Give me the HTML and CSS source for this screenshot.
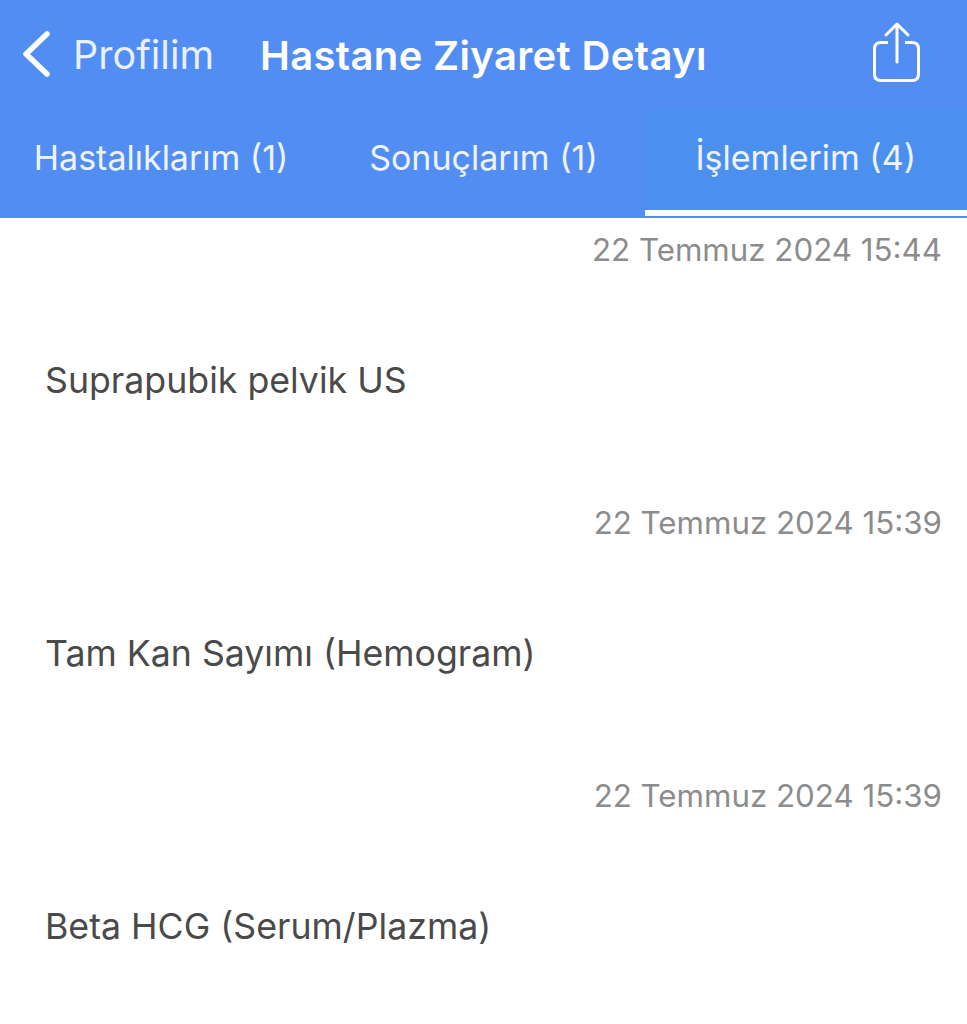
FILE: index.html
```html
<!DOCTYPE html>
<html lang="tr">
<head>
    <meta charset="UTF-8">
    <meta name="viewport" content="width=device-width, initial-scale=1.0">
    <title>Hastane Ziyaret Detayı</title>
    <link rel="stylesheet" href="styles.css">
</head>
<body>
    <div class="header">
        <div class="navbar">
            <a class="back">
                <svg class="back-icon" width="32" height="50" viewBox="0 0 32 50">
                    <path d="M27 4 L6 24 L27 44" fill="none" stroke="#fff" stroke-width="5.5" stroke-linecap="round" stroke-linejoin="round"/>
                </svg>
                <span>Profilim</span>
            </a>
            <div class="title">Hastane Ziyaret Detayı</div>
            <svg class="share-icon" width="50" height="62" viewBox="0 0 50 62">
                <path d="M16 20.5 H9 Q2.5 20.5 2.5 27 V52 Q2.5 58.5 9 58.5 H40 Q46.5 58.5 46.5 52 V27 Q46.5 20.5 40 20.5 H33" fill="none" stroke="#fff" stroke-width="3"/>
                <path d="M25 40 V2.5 M14 13 L25 2 L36 13" fill="none" stroke="#fff" stroke-width="3" stroke-linecap="round" stroke-linejoin="round"/>
            </svg>
        </div>
        <div class="tabs">
            <div class="tab">Hastalıklarım (1)</div>
            <div class="tab">Sonuçlarım (1)</div>
            <div class="tab active">İşlemlerim (4)</div>
        </div>
    </div>
    <div class="list">
        <div class="item">
            <div class="date">22 Temmuz 2024 15:44</div>
            <div class="name">Suprapubik pelvik US</div>
        </div>
        <div class="item">
            <div class="date">22 Temmuz 2024 15:39</div>
            <div class="name">Tam Kan Sayımı (Hemogram)</div>
        </div>
        <div class="item">
            <div class="date">22 Temmuz 2024 15:39</div>
            <div class="name">Beta HCG (Serum/Plazma)</div>
        </div>
    </div>
</body>
</html>
```

FILE: styles.css
```css
body {
    margin: 0;
    background-color: #fff;
    font-family: Inter, "Liberation Sans", sans-serif;
    overflow: hidden;
}

.header {
    background-color: #528df3;
    color: #fff;
}

.navbar {
    display: flex;
    align-items: center;
    height: 110px;
    padding: 0 45px 0 20px;
}

.back {
    display: flex;
    align-items: center;
    gap: 21px;
    font-size: 39.5px;
    color: #e9f0fe;
}

.title {
    margin-left: 46px;
    font-size: 40px;
    font-weight: 600;
    letter-spacing: 0.35px;
}

.share-icon {
    margin-left: auto;
    margin-top: -4px;
}

.tabs {
    display: flex;
    height: 108px;
}

.tab {
    flex: 1;
    display: flex;
    justify-content: center;
    align-items: center;
    padding-bottom: 14px;
    box-sizing: border-box;
    font-size: 34px;
    color: #eef4fe;
}

.tab.active {
    background-color: #4c90ef;
    border-bottom: 6px solid #fff;
    margin-bottom: 2px;
    height: 106px;
    padding-bottom: 6px;
    box-shadow: 0 2px 0 #528df3;
}

.item {
    height: 273px;
    box-sizing: border-box;
    padding: 14px 25px 0 45px;
}

.date {
    text-align: right;
    font-size: 31.3px;
    line-height: 36px;
    color: #8c8c8c;
}

.name {
    margin-top: 91px;
    font-size: 35.7px;
    line-height: 42px;
    color: #4a4a4a;
}
```
